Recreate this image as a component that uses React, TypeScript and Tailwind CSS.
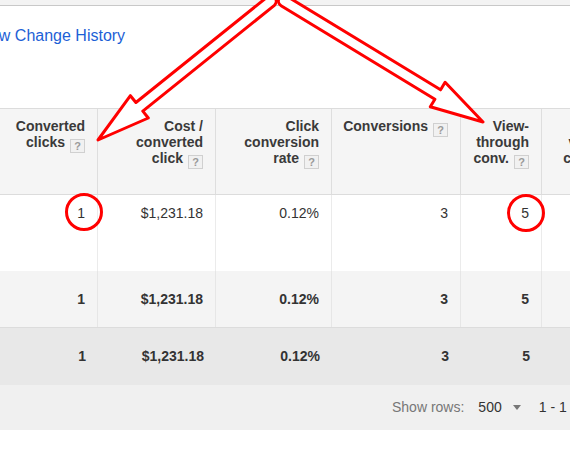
import React from "react";

type Pt = [number, number];

// outline arrow with a rounded tail, like the markup drawn on the screenshot
const arrowPath = (tail: Pt, tip: Pt, hw = 5.5, hh = 14.3, hl = 53) => {
  const dx = tip[0] - tail[0];
  const dy = tip[1] - tail[1];
  const len = Math.hypot(dx, dy);
  const ux = dx / len;
  const uy = dy / len;
  const nx = -uy;
  const ny = ux;
  const bx = tip[0] - hl * ux;
  const by = tip[1] - hl * uy;
  const p = (x: number, y: number) => `${x.toFixed(1)} ${y.toFixed(1)}`;
  return [
    `M ${p(tip[0], tip[1])}`,
    `L ${p(bx + hh * nx, by + hh * ny)}`,
    `L ${p(bx + hw * nx, by + hw * ny)}`,
    `L ${p(tail[0] + hw * nx, tail[1] + hw * ny)}`,
    `A ${hw} ${hw} 0 0 1 ${p(tail[0] - hw * nx, tail[1] - hw * ny)}`,
    `L ${p(bx - hw * nx, by - hw * ny)}`,
    `L ${p(bx - hh * nx, by - hh * ny)}`,
    "Z",
  ].join(" ");
};

const Help = () => (
  <span className="ml-[5px] inline-block w-[15px] h-[14px] border border-[#d0d0d0] bg-[#f1f1f1] text-[#9a9a9a] text-[11px] leading-[12px] font-bold text-center align-[-3px]">
    ?
  </span>
);

const HEADERS: string[][] = [
  ["Converted", "clicks"],
  ["Cost /", "converted", "click"],
  ["Click", "conversion", "rate"],
  ["Conversions"],
  ["View-", "through", "conv."],
  ["Conv.", "value /", "cost"],
];

const COLS = "grid grid-cols-[98px_118px_116px_129px_81px_83px]";

const ROW = ["1", "$1,231.18", "0.12%", "3", "5", ""];

const App = () => (
  <div className="relative w-[570px] h-[465px] overflow-hidden bg-white font-['Liberation_Sans',Arial,sans-serif] text-[14px] text-[#333]">
    <div className="h-[6px] bg-[#f3f3f3] border-b border-[#c8c8c8]" />
    <div className="h-[102px] pt-[21px]">
      <a className="block -ml-[24px] text-[16px] leading-[18px] text-[#1d5fd6] whitespace-nowrap">View Change History</a>
    </div>

    <div className="w-[625px]">
      <div className={`${COLS} h-[87px] border-y border-[#dcdcdc] bg-[#f5f5f5] font-bold text-[#3a3a3a] leading-[16px]`}>
        {HEADERS.map((lines, i) => (
          <div key={i} className="border-r border-[#dedede] pt-[9px] pr-3 text-right">
            {lines.map((l, j) => (
              <div key={j} className="whitespace-nowrap">
                {l}
                {j === lines.length - 1 && <Help />}
              </div>
            ))}
          </div>
        ))}
      </div>

      <div className={`${COLS} h-[76px] bg-white leading-[16px]`}>
        {ROW.map((v, i) => (
          <div key={i} className="border-r border-[#ebebeb] pt-[10px] pr-3 text-right">{v}</div>
        ))}
      </div>

      <div className={`${COLS} h-[57px] bg-[#f4f4f4] border-b border-[#dcdcdc] font-bold`}>
        {ROW.map((v, i) => (
          <div key={i} className="border-r border-[#e6e6e6] pr-3 flex items-center justify-end">{v}</div>
        ))}
      </div>

      <div className={`${COLS} h-[57px] bg-[#e8e8e8] font-bold`}>
        {ROW.map((v, i) => (
          <div key={i} className="pr-3 flex items-center justify-end">{v}</div>
        ))}
      </div>
    </div>

    <div className="h-[45px] bg-[#f0f0f0] flex items-center pl-[392px] whitespace-nowrap">
      <span className="text-[#777]">Show rows:</span>
      <span className="ml-[14px]">500</span>
      <span className="ml-[11px] w-0 h-0 border-x-[4px] border-x-transparent border-t-[5px] border-t-[#777]" />
      <span className="ml-[7px] w-px h-[31px] bg-[#cfcfcf]" />
      <span className="ml-[11px]">1 - 1 of 1</span>
    </div>

    <svg className="absolute inset-0 pointer-events-none" width="570" height="465" viewBox="0 0 570 465">
      <g fill="#fff" stroke="#f00" strokeWidth="3" strokeLinejoin="round">
        <path d={arrowPath([271, 1], [98, 140])} />
        <path d={arrowPath([284, 1], [483, 122])} />
      </g>
      <g fill="none" stroke="#f00" strokeWidth="3">
        <circle cx="84" cy="212" r="17.5" />
        <circle cx="526" cy="213" r="17.5" />
      </g>
    </svg>
  </div>
);

export default App;
